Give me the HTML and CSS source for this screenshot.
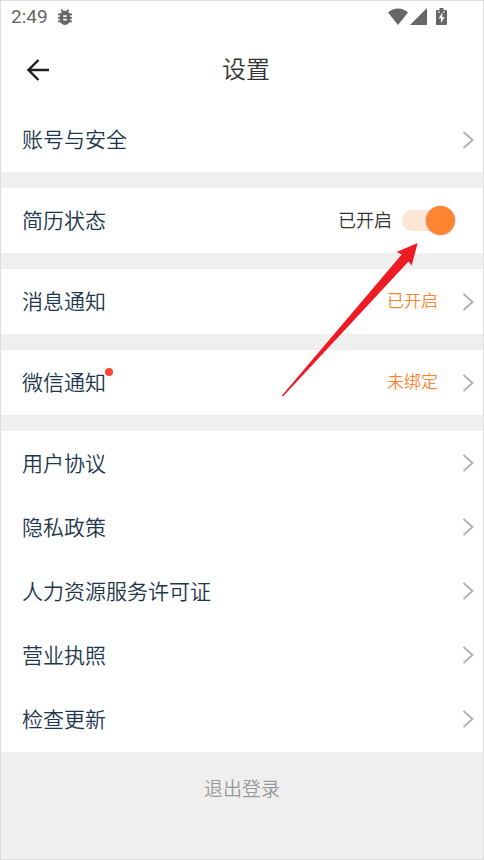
FILE: index.html
```html
<!DOCTYPE html>
<html lang="zh-CN">
<head>
<meta charset="utf-8">
<meta name="viewport" content="width=device-width, initial-scale=1">
<title>设置</title>
<link rel="stylesheet" href="styles.css">
</head>
<body>
<svg class="sprite" aria-hidden="true">
  <symbol id="chevron" viewBox="0 0 12 20"><path d="M1.500 2 10.500 10 1.500 18" fill="none" stroke="#b3b3b3" stroke-width="2"/></symbol>
</svg>
<div class="screen">
  <div class="status-bar">
    <span class="time">2:49</span>
    <svg class="bug" viewBox="4 3 16 18" preserveAspectRatio="none" aria-hidden="true"><path fill="#666" d="M20 8h-2.810c-.45-.78-1.070-1.450-1.820-1.960L17 4.410 15.590 3l-2.170 2.170C12.960 5.060 12.490 5 12 5s-.96.06-1.410.17L8.410 3 7 4.410l1.620 1.630C7.880 6.550 7.260 7.220 6.810 8H4v2h2.090c-.05.33-.09.66-.09 1v1H4v2h2v1c0 .34.04.67.09 1H4v2h2.810c1.040 1.790 2.970 3 5.190 3s4.150-1.210 5.190-3H20v-2h-2.090c.05-.33.09-.66.09-1v-1h2v-2h-2v-1c0-.34-.04-.67-.09-1H20V8zm-6 8h-4v-2h4v2zm0-4h-4v-2h4v2z"/></svg>
    <span class="indicators">
      <svg class="wifi" viewBox="0 0 20 17" aria-hidden="true"><path fill="#666" d="M0 4.500C5.500-.7 14.500-.7 20 4.500L10 17z"/></svg>
      <svg class="signal" viewBox="0 0 17 17" aria-hidden="true"><path fill="#666" d="M17 0v17H0z"/></svg>
      <svg class="battery" viewBox="0 0 11 17" aria-hidden="true"><path fill="#666" d="M3.500 0h4v2H10q1 0 1 1v13q0 1-1 1H1q-1 0-1-1V3q0-1 1-1h2.500z"/><path fill="#fff" d="M6.300 4.500 2.500 10.500H5V15l3.700-6H6.300zM2 3.500h2v1H2zM7 3.500h2v1H7z"/></svg>
    </span>
  </div>
  <header class="app-bar">
    <button class="back" type="button" aria-label="返回">
      <svg viewBox="0 0 22 22" aria-hidden="true"><path d="M22 11H2M11.500 1 1.500 11l10 10" fill="none" stroke="#1f1f1f" stroke-width="2.400"/></svg>
    </button>
    <h1>设置</h1>
  </header>
  <main>
    <section class="card"><a class="row" href="#account"><span>账号与安全</span><svg class="chevron"><use href="#chevron"/></svg></a></section>
    <section class="card">
      <div class="row switch-row">
        <label for="resume">简历状态</label>
        <span class="state">已开启</span>
        <input class="switch" id="resume" type="checkbox" role="switch" checked>
        <svg class="pointer" viewBox="0 0 138 156" aria-hidden="true"><path fill="#ed1c24" d="M135.700 0 129.700 22.500 126.500 18.500 1 153.500l-1-1L119.700 11.500 114.500 9z"/></svg>
      </div>
    </section>
    <section class="card"><a class="row" href="#messages"><span>消息通知</span><span class="value">已开启</span><svg class="chevron"><use href="#chevron"/></svg></a></section>
    <section class="card"><a class="row" href="#wechat"><span class="badged">微信通知</span><span class="value">未绑定</span><svg class="chevron"><use href="#chevron"/></svg></a></section>
    <section class="card list">
      <a class="row" href="#terms"><span>用户协议</span><svg class="chevron"><use href="#chevron"/></svg></a>
      <a class="row" href="#privacy"><span>隐私政策</span><svg class="chevron"><use href="#chevron"/></svg></a>
      <a class="row" href="#permit"><span>人力资源服务许可证</span><svg class="chevron"><use href="#chevron"/></svg></a>
      <a class="row" href="#license"><span>营业执照</span><svg class="chevron"><use href="#chevron"/></svg></a>
      <a class="row" href="#update"><span>检查更新</span><svg class="chevron"><use href="#chevron"/></svg></a>
    </section>
  </main>
  <button class="logout" type="button">退出登录</button>
</div>
</body>
</html>
```
FILE: styles.css
```css
* {
  box-sizing: border-box;
}

body {
  margin: 0;
  font-family: "Noto Sans CJK SC DemiLight", "Noto Sans CJK SC", sans-serif;
  font-weight: 350;
  color: #1d364d;
}

.sprite {
  position: absolute;
  width: 0;
  height: 0;
}

.screen {
  min-height: 100vh;
  border: 1px solid #dedede;
  background: #efefef;
}

.status-bar {
  display: flex;
  align-items: center;
  gap: 10px;
  height: 31px;
  padding: 0 36px 0 10px;
  background: #fff;
}

.time {
  font-family: Roboto, sans-serif;
  font-size: 19px;
  font-weight: 400;
  line-height: 30px;
  color: #666;
}

.bug {
  width: 14px;
  height: 16px;
}

.indicators {
  display: flex;
  align-items: center;
  margin-left: auto;
}

.wifi {
  width: 20px;
  height: 17px;
  margin-right: 2px;
}

.signal {
  width: 17px;
  height: 17px;
  margin-right: 9px;
}

.battery {
  width: 11px;
  height: 17px;
}

.app-bar {
  display: grid;
  grid-template-columns: 70px 1fr 62px;
  align-items: center;
  height: 75px;
  background: #fff;
}

.back {
  display: flex;
  padding: 0 0 0 26px;
  border: 0;
  background: none;
}

.back svg {
  width: 22px;
  height: 22px;
}

h1 {
  margin: 0;
  padding-bottom: 3px;
  font-size: 24px;
  font-weight: inherit;
  line-height: 36px;
  text-align: center;
  color: #333;
}

main {
  display: flex;
  flex-direction: column;
  gap: 16px;
}

.card {
  background: #fff;
}

.row {
  display: flex;
  align-items: center;
  height: 65px;
  padding: 0 9px 0 21px;
  font-size: 21px;
  line-height: 32px;
  color: inherit;
  text-decoration: none;
}

.row > span,
.row > label {
  padding-bottom: 3px;
}

.list {
  padding-bottom: 1px;
}

.list .row {
  height: 64px;
}

.chevron {
  width: 12px;
  height: 20px;
  margin-left: auto;
}

.value {
  margin-left: auto;
  font-size: 17px;
  color: #ff8533;
}

.value + .chevron {
  margin-left: 24px;
}

.badged {
  position: relative;
}

.badged::after {
  content: "";
  position: absolute;
  top: 3px;
  right: -7px;
  width: 8px;
  height: 8px;
  border-radius: 50%;
  background: #ff4433;
}

.switch-row {
  position: relative;
  padding-right: 28px;
}

.state {
  margin-left: auto;
  font-size: 18px;
  color: #333;
}

.switch {
  appearance: none;
  display: flex;
  align-items: center;
  justify-content: flex-end;
  width: 53px;
  height: 21px;
  margin: 0 0 0 10px;
  border-radius: 11px;
  background: #ffe5d6;
}

.switch::before {
  content: "";
  flex: none;
  width: 29px;
  height: 29px;
  border-radius: 50%;
  background: #ff8533;
  box-shadow: 0 0 2px #0000004d;
}

.switch:not(:checked) {
  justify-content: flex-start;
}

.pointer {
  position: absolute;
  top: 55px;
  right: 63px;
  width: 138px;
  height: 156px;
  pointer-events: none;
}

.logout {
  display: block;
  width: 100%;
  padding: 22px 0;
  border: 0;
  background: none;
  font-family: inherit;
  font-size: 19px;
  font-weight: inherit;
  line-height: 28px;
  color: #999;
}
```
